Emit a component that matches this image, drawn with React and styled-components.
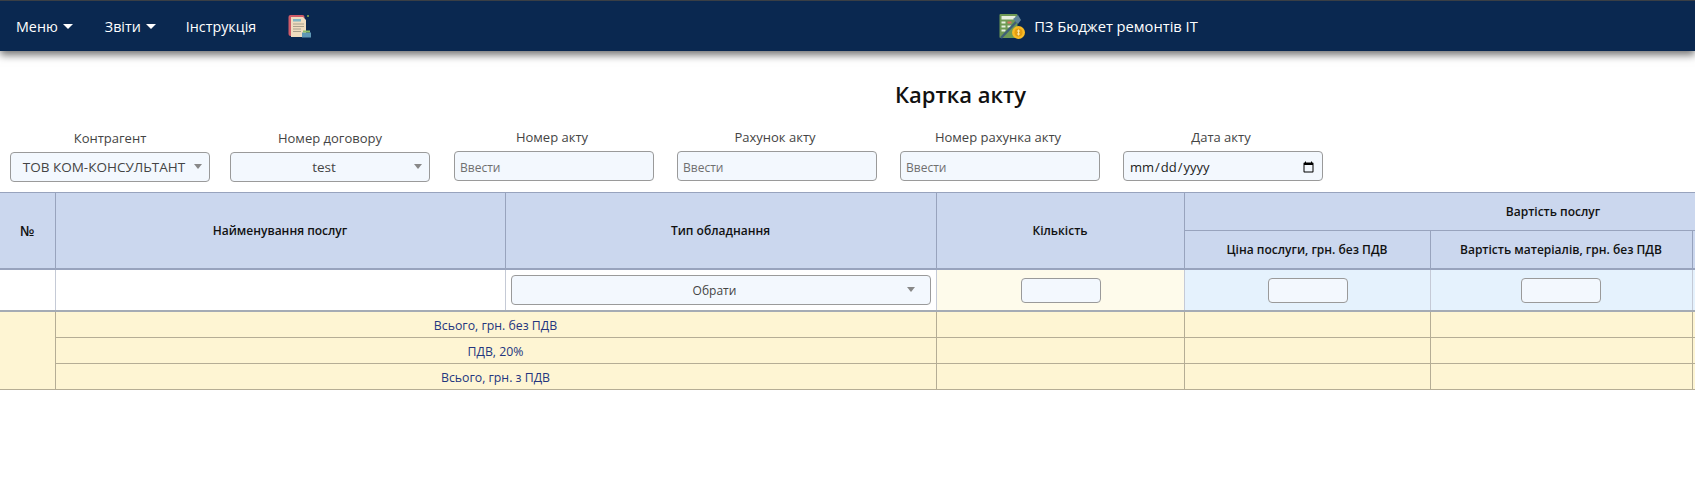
import styled, { createGlobalStyle } from "styled-components";

const GlobalStyle = createGlobalStyle`
  html, body {
    margin: 0;
    padding: 0;
    background: #fff;
    font-family: "Open Sans", "Noto Sans", sans-serif;
    overflow: hidden;
  }
`;

const Navbar = styled.header`
  height: 50px;
  background: #0a2850;
  border-top: 1px solid #3a3f45;
  box-shadow: 0 4px 8px rgba(0, 0, 0, 0.55);
  display: flex;
  align-items: center;
  padding-left: 16px;
  color: #fff;
  font-size: 14.3px;
`;

const NavItem = styled.div`
  display: flex;
  align-items: center;
  gap: 5px;
  margin-right: ${({ $gap }) => $gap}px;
`;

const Caret = styled.span`
  width: 0;
  height: 0;
  border-left: 5px solid transparent;
  border-right: 5px solid transparent;
  border-top: 5px solid #fff;
`;

const Brand = styled.div`
  display: flex;
  align-items: center;
  gap: 9px;
  margin-left: 687px;
  font-size: 14.7px;
`;

const Title = styled.h1`
  margin: 28px 0 0;
  height: 30px;
  font-size: 22px;
  line-height: 30px;
  font-weight: 600;
  color: #111;
  text-align: center;
  padding-left: 226px;
`;

const Filters = styled.div`
  display: flex;
  padding: 20px 0 0 10px;
  height: 53px;
`;

const Field = styled.div`
  width: 200px;
  margin-right: ${({ $gap }) => $gap}px;
  margin-top: ${({ $lift }) => ($lift ? -1 : 0)}px;
  display: flex;
  flex-direction: column;
  align-items: center;
`;

const FieldLabel = styled.label`
  font-size: 13px;
  line-height: 18px;
  color: #444;
  margin-bottom: 5px;
  margin-right: ${({ $lift }) => ($lift ? 4 : 0)}px;
`;

const SelectBox = styled.div`
  width: ${({ $width }) => $width || "100%"};
  height: 30px;
  flex-shrink: 0;
  box-sizing: border-box;
  margin: 0 auto;
  background: #f3f8fe;
  border: 1px solid #9a9a9a;
  border-radius: 4px;
  display: flex;
  align-items: center;
  justify-content: center;
  padding: 0 22px 0 10px;
  position: relative;
  font-size: ${({ $size }) => $size || 13.5}px;
  color: #444;
  white-space: nowrap;
  &::after {
    content: "";
    position: absolute;
    right: ${({ $arrow }) => $arrow || 7}px;
    top: 50%;
    margin-top: -3px;
    border-left: 4.5px solid transparent;
    border-right: 4.5px solid transparent;
    border-top: 5px solid #888;
  }
`;

const TextInput = styled.input`
  width: 100%;
  height: 30px;
  flex-shrink: 0;
  box-sizing: border-box;
  background: #f3f8fe;
  border: 1px solid #9a9a9a;
  border-radius: 4px;
  padding: 2px 5px 0;
  font-family: inherit;
  font-size: 12px;
  color: #444;
  &::placeholder {
    color: #6f6f6f;
    opacity: 1;
  }
`;

const DateInput = styled(TextInput)`
  font-size: 13px;
  color: #222;
`;

const TableWrap = styled.div`
  margin-top: 10px;
  overflow: hidden;
  width: 100%;
`;

const Table = styled.table`
  border-collapse: collapse;
  table-layout: fixed;
  width: 1922px;
  font-size: 12px;
`;

const HeadCell = styled.th`
  background: #cbd7ee;
  border: 1px solid #98a3bd;
  border-left: ${({ $first }) => ($first ? "none" : "1px solid #98a3bd")};
  border-bottom: ${({ $low }) => ($low ? "2px solid #98a3bd" : "1px solid #98a3bd")};
  font-weight: 600;
  font-size: ${({ $size }) => $size || 12}px;
  color: #111;
  text-align: center;
  height: ${({ $height }) => $height}px;
  padding: 0;
`;

const Cell = styled.td`
  background: ${({ $bg }) => $bg};
  border: 1px solid #c5cad6;
  border-left: ${({ $first, $dark }) =>
    $first ? "none" : `1px solid ${$dark ? "#98a3bd" : "#c5cad6"}`};
  border-bottom: 2px solid #a5abb4;
  height: 40px;
  padding: 0 0 0 ${({ $nudge }) => ($nudge ? 2 : 0)}px;
  text-align: center;
`;

const SmallInput = styled.input`
  width: 80px;
  height: 25px;
  box-sizing: border-box;
  background: #f3f8fe;
  border: 1px solid #9a9a9a;
  border-radius: 4px;
  display: block;
  margin: 0 auto;
`;

const SumCell = styled.td`
  background: #fef5d3;
  border: 1px solid #b5ad95;
  border-left: ${({ $first }) => ($first ? "none" : "1px solid #b5ad95")};
  height: 24px;
  padding: 1px 0 0;
  text-align: center;
  font-size: 12.3px;
  color: #24367f;
  font-weight: 500;
`;

const ReportIcon = () => (
  <svg width="24" height="24" viewBox="0 0 24 24">
    <rect x="0.5" y="1" width="16" height="21" rx="2" fill="#cf5a68" />
    <path d="M3 3h12l3 3v17H3z" fill="#efdcbf" />
    <rect x="5" y="5" width="8" height="2.5" fill="#7fb5c4" />
    <path d="M5 10h11M5 12.5h11M5 15h8M5 17.5h8" stroke="#a8a08c" strokeWidth="1" />
    <rect x="14" y="18.5" width="9" height="5" fill="#5f98b5" />
    <rect x="15" y="16.5" width="7" height="2" fill="#8fbf6a" />
    <rect x="19" y="1" width="2" height="2" fill="#6f8a4a" />
  </svg>
);

const BudgetIcon = () => (
  <svg width="26" height="26" viewBox="0 0 26 26">
    <rect x="0.5" y="1" width="18" height="24" rx="1" fill="#6f9a55" />
    <rect x="2.5" y="3" width="14" height="3.5" fill="#e8f0e0" />
    <path d="M2.5 8.5h4v2h-4zM2.5 12.5h4v2h-4zM2.5 16.5h4v2h-4zM8.5 12.5h4v2h-4z" fill="#e8f0e0" />
    <path d="M8.5 8.5h4v2h-4z" fill="#d9705f" />
    <path d="M2 25L18 8" stroke="#3f5f78" strokeWidth="2.5" />
    <path d="M14 6l5 5 3-4-3-5z" fill="#5f8397" />
    <circle cx="19.5" cy="19.5" r="6.5" fill="#f8bb25" />
    <circle cx="19.5" cy="19.5" r="4" fill="#e39c12" />
    <path d="M19.5 16.5v6M18 18h3M18 21h3" stroke="#fbe6a5" strokeWidth="1" />
  </svg>
);

const fields = [
  { label: "Контрагент", value: "ТОВ КОМ-КОНСУЛЬТАНТ", gap: 20 },
  { label: "Номер договору", value: "test", gap: 24 },
  { label: "Номер акту", gap: 23 },
  { label: "Рахунок акту", gap: 23 },
  { label: "Номер рахунка акту", gap: 23 },
];

const summary = ["Всього, грн. без ПДВ", "ПДВ, 20%", "Всього, грн. з ПДВ"];
const columns = [55, 450, 431, 248, 246, 262, 230];

export default function App() {
  return (
    <>
      <GlobalStyle />
      <Navbar>
        <NavItem $gap={32}>Меню <Caret /></NavItem>
        <NavItem $gap={30}>Звіти <Caret /></NavItem>
        <NavItem $gap={32}>Інструкція</NavItem>
        <ReportIcon />
        <Brand>
          <BudgetIcon />
          ПЗ Бюджет ремонтів ІТ
        </Brand>
      </Navbar>
      <Title>Картка акту</Title>
      <Filters>
        {fields.map((f) => (
          <Field key={f.label} $gap={f.gap} $lift={!f.value}>
            <FieldLabel $lift={!f.value}>{f.label}</FieldLabel>
            {f.value ? <SelectBox>{f.value}</SelectBox> : <TextInput placeholder="Ввести" />}
          </Field>
        ))}
        <Field $gap={0} $lift>
          <FieldLabel $lift>Дата акту</FieldLabel>
          <DateInput type="date" />
        </Field>
      </Filters>
      <TableWrap>
        <Table>
          <colgroup>
            {columns.map((w, i) => (
              <col key={i} width={w} />
            ))}
          </colgroup>
          <thead>
            <tr>
              <HeadCell rowSpan={2} $first $low $size={14}>№</HeadCell>
              <HeadCell rowSpan={2} $low>Найменування послуг</HeadCell>
              <HeadCell rowSpan={2} $low>Тип обладнання</HeadCell>
              <HeadCell rowSpan={2} $low>Кількість</HeadCell>
              <HeadCell colSpan={3} $height={37}>Вартість послуг</HeadCell>
            </tr>
            <tr>
              <HeadCell $low $height={37}>Ціна послуги, грн. без ПДВ</HeadCell>
              <HeadCell $low $height={37}>Вартість матеріалів, грн. без ПДВ</HeadCell>
              <HeadCell $low $height={37} />
            </tr>
          </thead>
          <tbody>
            <tr>
              <Cell $first $bg="#fff" />
              <Cell $bg="#fff" />
              <Cell $bg="#fff">
                <SelectBox $width="420px" $size={12} $arrow={15}>Обрати</SelectBox>
              </Cell>
              <Cell $bg="#fefbeb" $nudge><SmallInput /></Cell>
              <Cell $bg="#e5f2fd" $dark $nudge><SmallInput /></Cell>
              <Cell $bg="#e5f2fd" $dark><SmallInput /></Cell>
              <Cell $bg="#e5f2fd" $dark />
            </tr>
            {summary.map((text, i) => (
              <tr key={text}>
                {i === 0 && <SumCell rowSpan={3} $first />}
                <SumCell colSpan={2}>{text}</SumCell>
                <SumCell />
                <SumCell />
                <SumCell />
                <SumCell />
              </tr>
            ))}
          </tbody>
        </Table>
      </TableWrap>
    </>
  );
}
